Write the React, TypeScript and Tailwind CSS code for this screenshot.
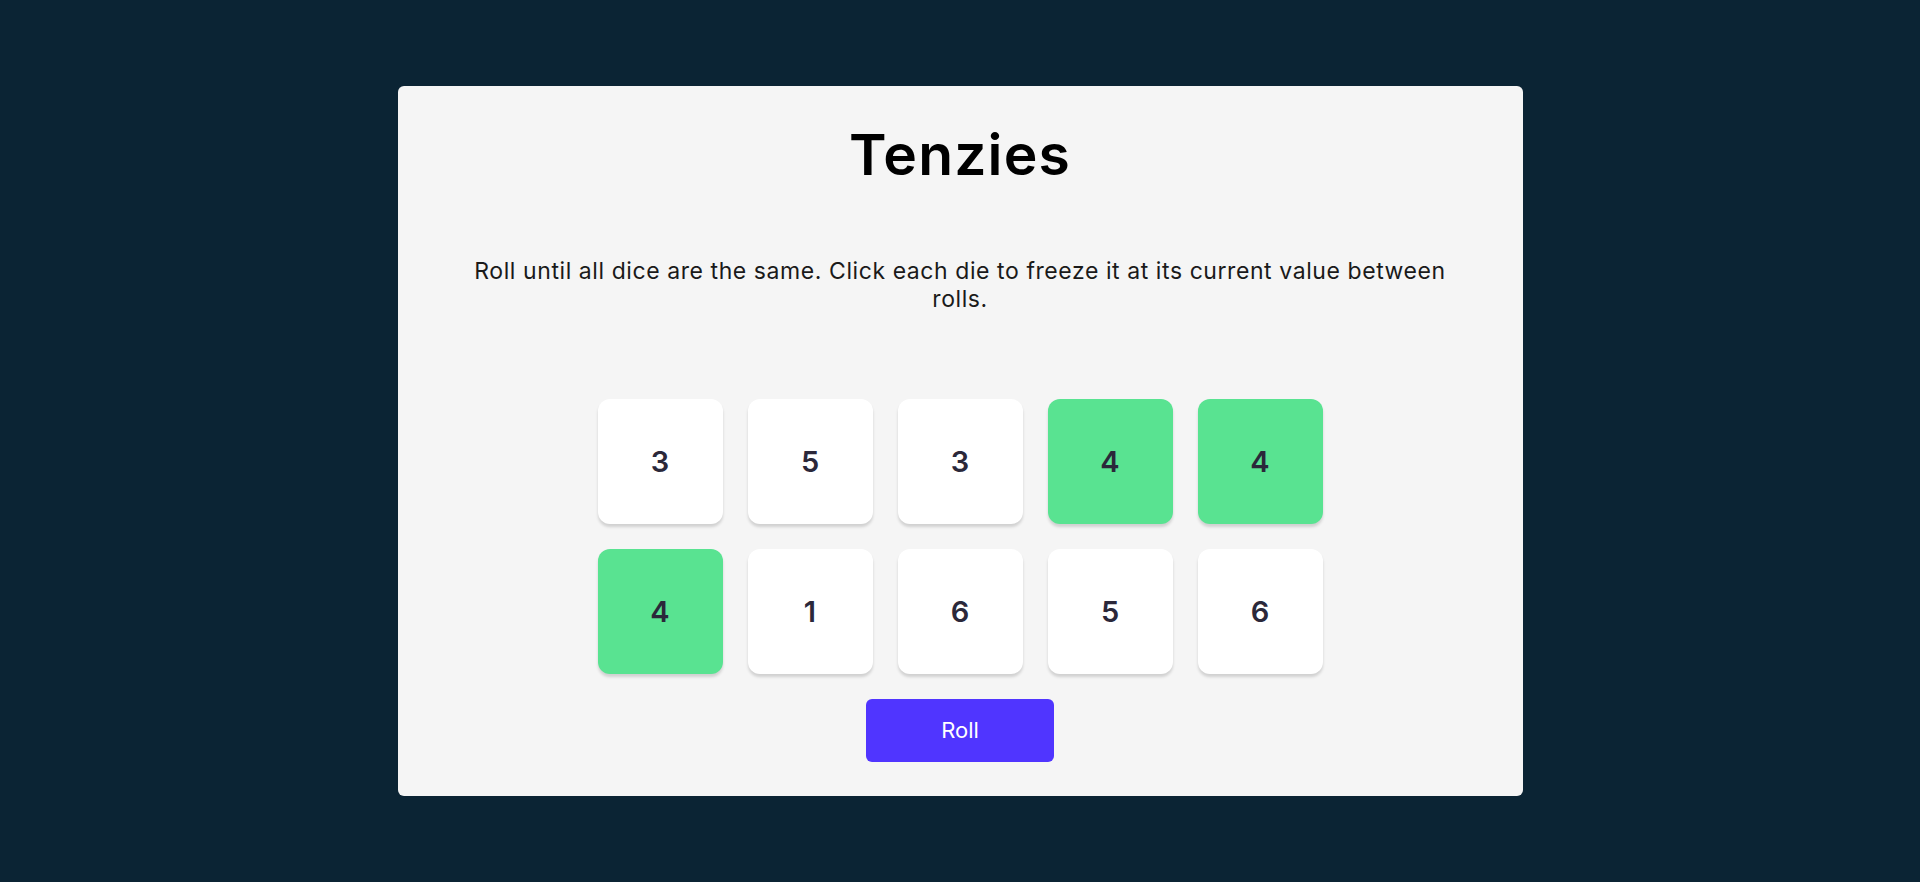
const dice = [
  { value: 3, held: false },
  { value: 5, held: false },
  { value: 3, held: false },
  { value: 4, held: true },
  { value: 4, held: true },
  { value: 4, held: true },
  { value: 1, held: false },
  { value: 6, held: false },
  { value: 5, held: false },
  { value: 6, held: false }
];

export default function App() {
  return (
    <div className="flex min-h-screen items-center justify-center bg-[#0B2434] font-['Inter',sans-serif]">
      <main className="flex w-[1125px] flex-col items-center rounded-md bg-[#F5F5F5] px-12 pb-[34px] pt-[40px]">
        <h1 className="text-[57px] font-semibold leading-none tracking-[0.02em] text-black">Tenzies</h1>

        <p className="mt-[74px] max-w-[1000px] text-center text-[23px] leading-[28px] tracking-[0.025em] text-[#1a1a1a]">
          Roll until all dice are the same. Click each die to freeze it at its current value between rolls.
        </p>

        <div className="mt-[86px] grid grid-cols-5 gap-[25px]">
          {dice.map((die, i) => (
            <button
              key={i}
              type="button"
              className={`flex h-[125px] w-[125px] items-center justify-center rounded-[12px] text-[29px] font-semibold text-[#2B283A] shadow-[0_3px_3px_rgba(0,0,0,0.15)] ${
                die.held ? 'bg-[#59E391]' : 'bg-white'
              }`}
            >
              {die.value}
            </button>
          ))}
        </div>

        <button
          type="button"
          className="mt-[25px] h-[63px] w-[188px] rounded-md bg-[#5035FF] text-[22px] text-white"
        >
          Roll
        </button>
      </main>
    </div>
  );
}
